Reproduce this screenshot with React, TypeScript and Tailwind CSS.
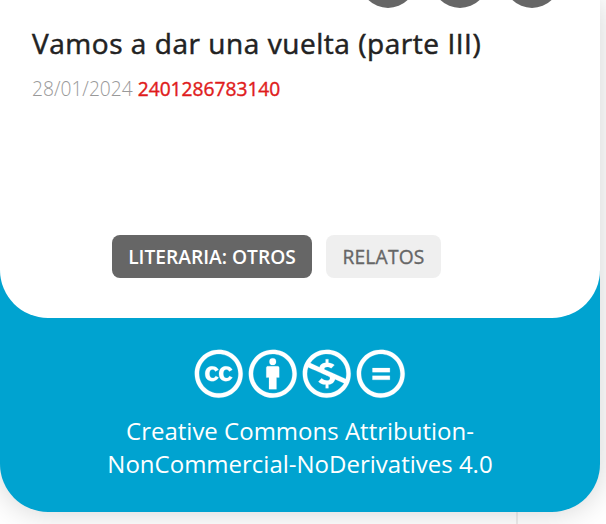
import {
  FaCreativeCommons,
  FaCreativeCommonsBy,
  FaCreativeCommonsNc,
  FaCreativeCommonsNd,
} from 'react-icons/fa';

const actions = ['share', 'download', 'more'];

const licenseIcons = [
  FaCreativeCommons,
  FaCreativeCommonsBy,
  FaCreativeCommonsNc,
  FaCreativeCommonsNd,
];

function WorkDetails() {
  return (
    <section className="h-[318px] overflow-hidden rounded-b-[48px] bg-white">
      <div className="-mt-12 flex justify-end gap-4 pr-10">
        {actions.map((action) => (
          <button
            key={action}
            aria-label={action}
            className="size-14 rounded-full bg-[#666]"
          />
        ))}
      </div>
      <div className="px-8 pt-4">
        <h1 className="text-[28px] leading-[38px] font-medium tracking-[0.54px] text-[#222] [-webkit-text-stroke:0.5px_#222]">
          Vamos a dar una vuelta (parte III)
        </h1>
        <p className="mt-3.5 text-[19.2px] leading-[26px]">
          <span className="font-light text-[#999]">28/01/2024</span>{' '}
          <span className="text-[#e01b1b] [-webkit-text-stroke:0.4px_#e01b1b]">
            2401286783140
          </span>
        </p>
      </div>
      <div className="mt-[133px] flex gap-[14px] pl-28 text-[19.2px] leading-[43px]">
        <span className="h-[43px] w-[200px] rounded-lg bg-[#666] text-center font-semibold whitespace-nowrap text-white">
          LITERARIA: OTROS
        </span>
        <span className="h-[43px] w-[115px] rounded-lg bg-[#efefef] text-center tracking-[0.2px] text-[#666] [-webkit-text-stroke:0.35px_#666]">
          RELATOS
        </span>
      </div>
    </section>
  );
}

function License() {
  return (
    <footer className="pt-8 text-center text-white">
      <div className="flex justify-center gap-1.5">
        {licenseIcons.map((Icon, i) => (
          <span key={i} className="flex size-12 items-center justify-center">
            <Icon
              size={49.5}
              className="shrink-0 stroke-white stroke-[2px]"
            />
          </span>
        ))}
      </div>
      <p className="mx-auto mt-4 w-[400px] text-[24px] leading-[33px]">
        Creative Commons Attribution-
        <br />
        NonCommercial-NoDerivatives 4.0
      </p>
    </footer>
  );
}

export default function App() {
  return (
    <main className="relative h-[524px] w-[606px] overflow-hidden bg-white font-['Open_Sans',sans-serif]">
      <div className="absolute top-0 left-[516px] h-full w-0.5 bg-[#eee]" />
      <article className="relative h-[512px] w-[600px] rounded-b-[48px] bg-[#00a3d0] shadow-[0_0_32px_rgba(0,0,0,0.18)]">
        <WorkDetails />
        <License />
      </article>
    </main>
  );
}
